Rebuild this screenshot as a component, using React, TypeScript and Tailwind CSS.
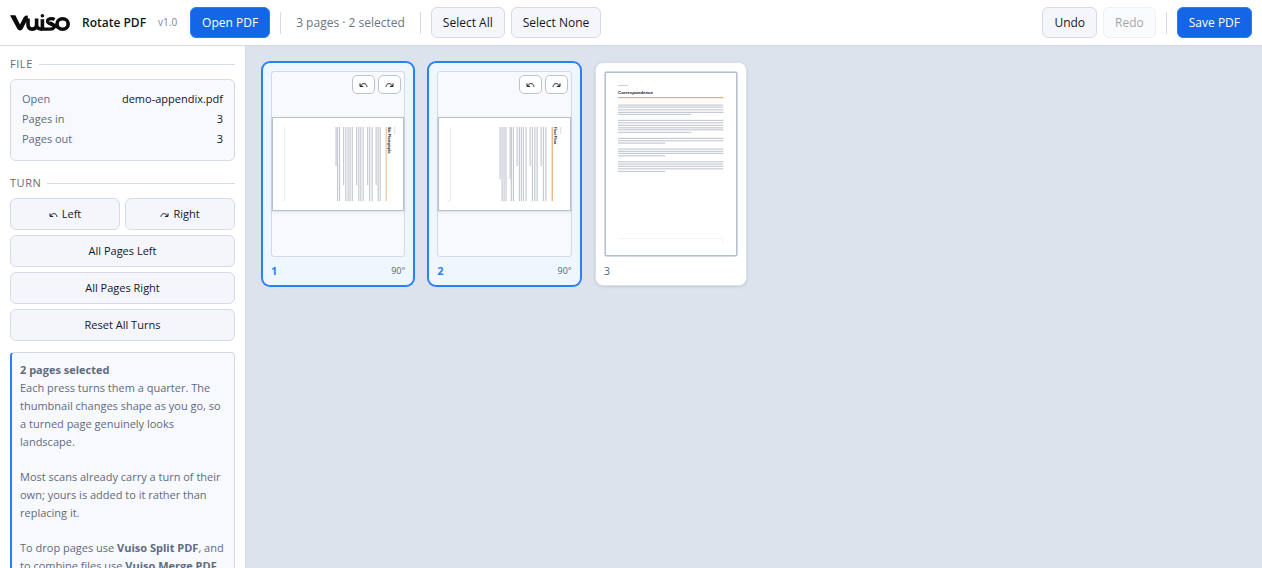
import { useState } from "react";
import type { ReactNode } from "react";
import clsx from "clsx";

type Line = [pos: number, end: number];

interface PageInfo {
  id: number;
  turn: number;
  title: string;
  accent: string;
  lines: Line[];
}

// Text lines of each page: distance from the top edge, and where the line ends
const PAGES: PageInfo[] = [
  {
    id: 1,
    turn: 90,
    title: "Site Photographs",
    accent: "#efb98a",
    lines: [
      [24, 84], [26, 84], [28, 68], [32, 84], [34.5, 84], [36.5, 68], [41, 84], [43.3, 84], [45.3, 84], [47.5, 68],
      [51.8, 84], [54, 84], [56, 84], [58.3, 84], [60.5, 68], [64.5, 84], [66.5, 84], [68, 49],
    ],
  },
  {
    id: 2,
    turn: 90,
    title: "Floor Plans",
    accent: "#e8995a",
    lines: [
      [24.3, 84], [26.7, 84], [29, 49], [33, 84], [35.3, 84], [37.7, 84], [40, 49], [44, 84], [46.7, 84], [48.7, 84],
      [50.7, 84], [53, 49], [56.7, 84], [58.7, 84], [60, 62], [64, 84], [66, 84], [68, 84], [70, 62],
    ],
  },
  {
    id: 3,
    turn: 0,
    title: "Correspondence",
    accent: "#efa870",
    lines: [
      [33, 118], [35, 118], [37.7, 118], [40.3, 118], [42.3, 86], [48.3, 118], [50.7, 118], [53.3, 118], [55.7, 118],
      [57.7, 118], [60.3, 86], [66.3, 118], [68.7, 118], [71, 60], [77, 118], [79.3, 118], [81.3, 118], [83.7, 60],
      [89.7, 118], [92, 118], [94.3, 118], [96.7, 118], [99.3, 60],
    ],
  },
];

const Logo = () => (
  <svg viewBox="0 0 60 18" className="h-[18px] w-[60px] shrink-0" fill="none" stroke="#0b0b0b" aria-label="Vuiso" role="img">
    <path d="M0 1.2H5.4L10 10.4L13.6 3.6C14.4 2 15.4 1.4 17.6 1.4L18 4.6L12.8 14.6C11.6 17.2 8.6 17.2 7.2 14.6Z" fill="#0b0b0b" stroke="none" />
    <path d="M18 4.6V10.6C18 13.8 19.8 15.1 22.2 15.1C24.8 15.1 26.6 13.6 26.6 10.6V4.6M26.6 11.5C27 14.4 29 15.1 32 15.1" strokeWidth="3.6" />
    <path d="M32.4 5.2V15" strokeWidth="3.6" />
    <path d="M44.6 5.6C41.4 3.8 37.4 4.8 37.6 7.4C37.8 9.4 40.4 9.6 42.6 10.8C45.6 12.6 43.6 15.1 40.4 15.1H32" strokeWidth="3.4" />
    <path d="M40 8.4L48 13.6" strokeWidth="3" />
    <ellipse cx="52.6" cy="10" rx="5.6" ry="5.2" strokeWidth="3.6" />
    <circle cx="32.4" cy="1.8" r="1.8" fill="#0b0b0b" stroke="none" />
  </svg>
);

const TurnIcon = ({ right = false }: { right?: boolean }) => (
  <svg viewBox="0 0 9 9" className="h-[9px] w-[9px] shrink-0" fill="none" stroke="currentColor" strokeWidth="1" aria-hidden="true">
    {right ? (
      <path d="M1 6.8C1.4 3 5.6 2.4 7.4 6M4.8 6.4H8V3.4" />
    ) : (
      <path d="M8 6.8C7.6 3 3.4 2.4 1.6 6M4.2 6.4H1V3.4" />
    )}
  </svg>
);

const BarButton = ({ primary, disabled, children }: { primary?: boolean; disabled?: boolean; children: ReactNode }) => (
  <button
    type="button"
    disabled={disabled}
    className={clsx(
      "h-[31px] shrink-0 rounded-md border px-[11px] text-[12px] whitespace-nowrap",
      primary ? "border-[#2b7bff] bg-[#1466e6] text-white" : "border-[#d5dbe6] bg-[#f4f6fb] text-[#14161f]",
      disabled && "opacity-40",
    )}
  >
    {children}
  </button>
);

const Divider = () => <span className="h-[22px] w-px shrink-0 bg-[#d5dbe6]" />;

const SideButton = ({ className, children }: { className?: string; children: ReactNode }) => (
  <button
    type="button"
    className={clsx(
      "flex h-8 items-center justify-center gap-1 rounded-md border border-[#d5dbe6] bg-[#f4f6fb] text-[11px] text-[#14161f]",
      className,
    )}
  >
    {children}
  </button>
);

const SectionTitle = ({ children }: { children: ReactNode }) => (
  <h2 className="flex h-4 items-center gap-[6px] text-[11px] font-medium tracking-wider text-[#5f6b7e] uppercase">
    {children}
    <span className="h-px flex-1 bg-[#d5dbe6]" />
  </h2>
);

const UprightPage = ({ page }: { page: PageInfo }) => (
  <svg viewBox="1 1 130 182" className="h-full w-full font-['Liberation_Sans',sans-serif]" preserveAspectRatio="none" aria-hidden="true">
    <rect width="132" height="184" fill="#fff" />
    <rect x="13" y="13" width="10" height="1" fill="#cfcfd4" />
    <text x="13" y="22.5" fontSize="4.4" fontWeight="700" fill="#15151c">{page.title}</text>
    <rect x="13" y="25" width="105" height="1.2" fill={page.accent} />
    {page.lines.map(([pos, end]) => (
      <rect key={pos} x="13" y={pos - 0.5} width={end - 13} height="1.2" fill="#c6cad4" />
    ))}
    <rect x="13" y="166" width="105" height="1" fill="#f4f4f6" />
    <rect x="117" y="169" width="1" height="1" fill="#dcdce0" />
  </svg>
);

const TurnedPage = ({ page }: { page: PageInfo }) => (
  <svg viewBox="1 1 130 92" className="block w-full font-['Liberation_Sans',sans-serif]" aria-hidden="true">
    <rect width="132" height="94" fill="#fff" />
    <g transform="translate(132 0) rotate(90)">
      <rect x="10" y="9" width="7" height="1.4" fill="#e2e3e8" />
      <text x="10" y="16.5" fontSize="3.2" fontWeight="700" fill="#15151c">{page.title}</text>
      <rect x="10" y="17.6" width="74" height="1" fill={page.accent} />
      {page.lines.map(([pos, end]) => (
        <rect key={pos} x="10" y={pos - 0.5} width={end - 10} height="1.2" fill="#c6cad4" />
      ))}
      <rect x="10" y="119" width="74" height="1" fill="#ececf0" />
      <rect x="83" y="121" width="1" height="1" fill="#dcdce0" />
    </g>
  </svg>
);

const PageCard = ({ page, selected, onToggle }: { page: PageInfo; selected: boolean; onToggle: () => void }) => (
  <li
    onClick={onToggle}
    className={clsx(
      "rounded-lg border p-2",
      selected
        ? "border-[#2b7fff] bg-[#f0f6ff] ring-1 ring-[#2b7fff]"
        : "border-[#d9e0ea] bg-white shadow-[0_1px_3px_rgba(20,40,80,0.12)]",
    )}
  >
    <div className="relative flex h-[186px] items-center rounded-[3px] border border-[#d3dae5] bg-[#f7f9fd]">
      {page.turn === 0 ? (
        <div className="h-full w-full border border-[#b4c0ce]">
          <UprightPage page={page} />
        </div>
      ) : (
        <div className="w-full border border-[#b4c0ce] shadow-[0_1px_3px_rgba(20,40,80,0.12)]">
          <TurnedPage page={page} />
        </div>
      )}
      {selected && (
        <div className="absolute top-[3px] right-[3px] flex gap-[3px]">
          {["left", "right"].map((dir) => (
            <button
              key={dir}
              type="button"
              aria-label={`Turn page ${page.id} ${dir}`}
              onClick={(e) => e.stopPropagation()}
              className="flex h-[19px] w-[23px] items-center justify-center rounded-[5px] border border-[#b9c3d2] bg-white text-[#14161f]"
            >
              <TurnIcon right={dir === "right"} />
            </button>
          ))}
        </div>
      )}
    </div>
    <div className="mt-2 flex h-3 items-center justify-between text-[11px]">
      <span className={selected ? "font-bold text-[#2b7fff]" : "text-[#5a6475]"}>{page.id}</span>
      {page.turn > 0 && <span className="text-[9px] text-[#5a6475]">{page.turn}°</span>}
    </div>
  </li>
);

const INFO = [
  ["Open", "demo-appendix.pdf"],
  ["Pages in", "3"],
  ["Pages out", "3"],
];

export default function App() {
  const [selected, setSelected] = useState<number[]>([1, 2]);

  const toggle = (id: number) =>
    setSelected((cur) => (cur.includes(id) ? cur.filter((n) => n !== id) : [...cur, id]));

  return (
    <div className="flex h-screen flex-col overflow-hidden bg-[#dce3ec] font-['Open_Sans','Noto_Sans',sans-serif] text-[#14161f]">
      <header className="flex h-[46px] shrink-0 items-center border-b border-[#d5dbe6] bg-white px-[10px]">
        <Logo />
        <h1 className="ml-3 text-[12px] font-semibold whitespace-nowrap">Rotate PDF</h1>
        <span className="mr-[13px] ml-3 text-[10px] text-[#7b8494]">v1.0</span>
        <div className="flex items-center gap-[10px]">
          <BarButton primary>Open PDF</BarButton>
          <Divider />
          <span className="px-[5px] text-[12px] whitespace-nowrap text-[#6b7585]">
            {PAGES.length} pages · {selected.length} selected
          </span>
          <Divider />
          <div className="flex gap-[6px]">
            <BarButton>Select All</BarButton>
            <BarButton>Select None</BarButton>
          </div>
        </div>
        <div className="ml-auto flex items-center gap-[10px]">
          <div className="flex gap-[6px]">
            <BarButton>Undo</BarButton>
            <BarButton disabled>Redo</BarButton>
          </div>
          <Divider />
          <BarButton primary>Save PDF</BarButton>
        </div>
      </header>

      <div className="flex min-h-0 flex-1">
        <aside className="w-[246px] shrink-0 overflow-y-auto border-r border-[#d5dbe6] bg-white px-[10px] py-[10px] [scrollbar-width:none]">
          <SectionTitle>File</SectionTitle>
          <dl className="mt-[7px] rounded-md border border-[#d5dbe6] bg-[#f7f9fd] px-[11px] pt-[9px] pb-[11px] text-[11px] leading-5">
            {INFO.map(([label, value]) => (
              <div key={label} className="flex justify-between">
                <dt className="text-[#5f6b7e]">{label}</dt>
                <dd>{value}</dd>
              </div>
            ))}
          </dl>

          <div className="mt-[14px]">
            <SectionTitle>Turn</SectionTitle>
          </div>
          <div className="mt-[7px] grid grid-cols-2 gap-[5px]">
            <SideButton>
              <TurnIcon />
              Left
            </SideButton>
            <SideButton>
              <TurnIcon right />
              Right
            </SideButton>
            <SideButton className="col-span-2">All Pages Left</SideButton>
            <SideButton className="col-span-2">All Pages Right</SideButton>
            <SideButton className="col-span-2">Reset All Turns</SideButton>
          </div>

          <div className="mt-[11px] flex flex-col gap-[17px] rounded-[4px] border border-l-2 border-[#d5dbe6] border-l-[#2b7fff] bg-[#f7f9fd] p-2 text-[11px] leading-[18px] text-[#5f6b7e]">
            <p>
              <strong className="block font-bold">2 pages selected</strong>
              Each press turns them a quarter. The thumbnail changes shape as you go, so a turned page genuinely looks
              landscape.
            </p>
            <p>Most scans already carry a turn of their own; yours is added to it rather than replacing it.</p>
            <p>
              To drop pages use <strong>Vuiso Split PDF</strong>, and to combine files use{" "}
              <strong>Vuiso Merge PDF</strong>.
            </p>
          </div>
        </aside>

        <main className="min-w-0 flex-1 overflow-y-auto p-4">
          <ul className="grid grid-cols-[repeat(auto-fill,minmax(150px,1fr))] gap-[14px]">
            {PAGES.map((page) => (
              <PageCard key={page.id} page={page} selected={selected.includes(page.id)} onToggle={() => toggle(page.id)} />
            ))}
          </ul>
        </main>
      </div>
    </div>
  );
}
